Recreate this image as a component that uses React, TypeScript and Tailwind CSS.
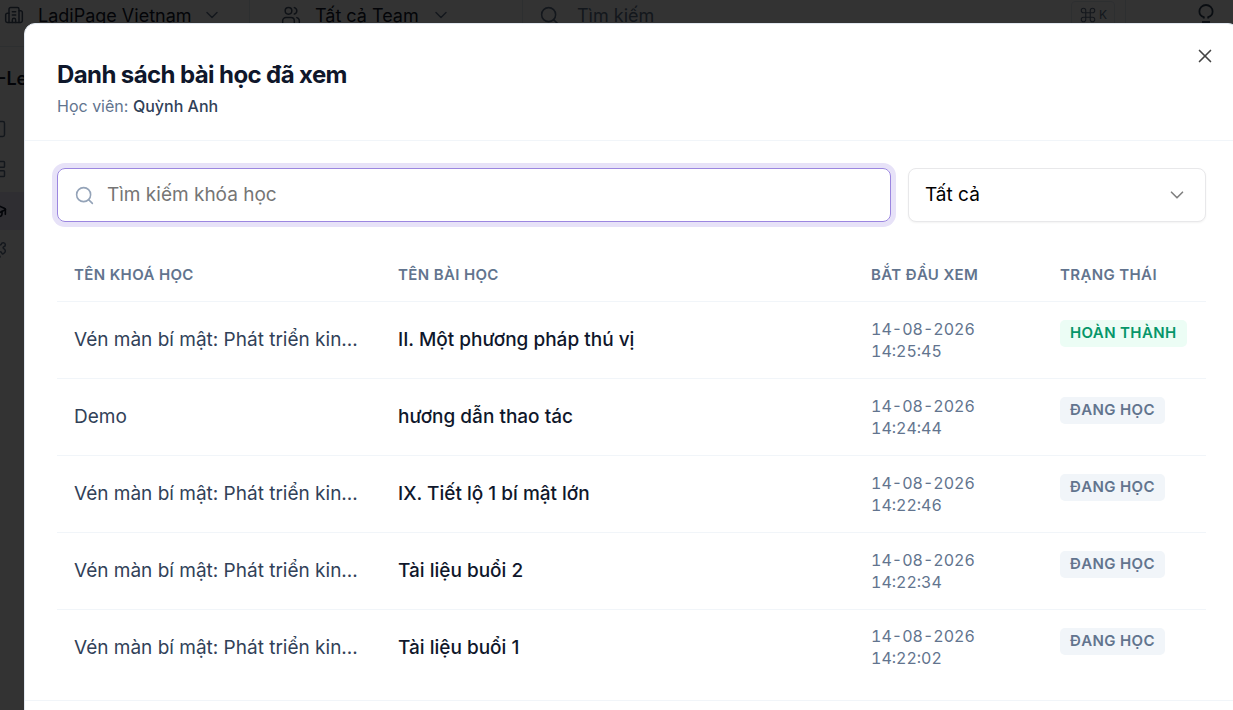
import { useState } from 'react'
import { Building2, ChevronDown, Command, GraduationCap, LayoutGrid, Puzzle, Search, Square, Users, X } from 'lucide-react'

type Status = 'done' | 'learning'

interface Lesson {
  course: string
  name: string
  date: string
  time: string
  status: Status
}

const COURSE = 'Vén màn bí mật: Phát triển kin...'

const lessons: Lesson[] = [
  { course: COURSE, name: 'II. Một phương pháp thú vị', date: '14-08-2026', time: '14:25:45', status: 'done' },
  { course: 'Demo', name: 'hương dẫn thao tác', date: '14-08-2026', time: '14:24:44', status: 'learning' },
  { course: COURSE, name: 'IX. Tiết lộ 1 bí mật lớn', date: '14-08-2026', time: '14:22:46', status: 'learning' },
  { course: COURSE, name: 'Tài liệu buổi 2', date: '14-08-2026', time: '14:22:34', status: 'learning' },
  { course: COURSE, name: 'Tài liệu buổi 1', date: '14-08-2026', time: '14:22:02', status: 'learning' },
]

function StatusBadge({ status }: { status: Status }) {
  const color = status === 'done' ? 'bg-[#ecfdf5] text-[#059669]' : 'bg-slate-100 text-slate-500'
  return (
    <span className={`inline-flex h-[27px] items-center rounded-[5px] px-[10px] text-[15px] font-semibold tracking-wide whitespace-nowrap ${color}`}>
      {status === 'done' ? 'HOÀN THÀNH' : 'ĐANG HỌC'}
    </span>
  )
}

function BulbIcon() {
  return (
    <svg width="16" height="20" viewBox="0 0 16 20" fill="none" stroke="currentColor" strokeWidth="1.8">
      <path d="M5.800 14.500v-1.400C3 12.300 1.400 10.200 1.400 7.600a6.600 6.600 0 0 1 13.200 0c0 2.600-1.600 4.700-4.400 5.500v1.400" />
      <path d="M4 18h8" />
    </svg>
  )
}

function TopBar() {
  return (
    <header className="-mt-4 flex h-[63px] shrink-0 items-center border-b border-slate-200 text-[18px] text-slate-900">
      <button className="flex h-full w-[250px] items-center border-r border-slate-200 pl-1">
        <Building2 size={20} strokeWidth={1.8} className="text-slate-600" />
        <span className="ml-[14px]">LadiPage Vietnam</span>
        <ChevronDown size={20} strokeWidth={1.8} className="ml-[10px] text-slate-500" />
      </button>
      <button className="flex h-full w-[273px] items-center border-r border-slate-200 pl-[31px]">
        <Users size={20} strokeWidth={1.8} className="text-slate-600" />
        <span className="ml-[14px]">Tất cả Team</span>
        <ChevronDown size={20} strokeWidth={1.8} className="ml-3 text-slate-500" />
      </button>
      <label className="flex h-full flex-1 items-center border-r border-slate-200 pr-[10px] pl-4">
        <Search size={21} strokeWidth={1.8} className="shrink-0 text-slate-500" />
        <input
          type="search"
          placeholder="Tìm kiếm"
          aria-label="Tìm kiếm"
          className="ml-[17px] min-w-0 flex-1 outline-none placeholder:text-slate-500"
        />
        <kbd className="flex h-[28px] w-[44px] items-center justify-center gap-[2px] rounded border border-slate-200 font-[Inter,sans-serif] text-[12px] text-slate-500">
          <Command size={18} strokeWidth={1.5} />
          K
        </kbd>
      </label>
      <button aria-label="Gợi ý" className="flex w-[107px] justify-center pl-[53px] pr-[1px] pb-[3px] text-slate-700">
        <BulbIcon />
      </button>
    </header>
  )
}

function Sidebar() {
  return (
    <aside className="w-6 text-slate-500">
      <p className="-ml-[2px] pt-[19px] pb-[20px] text-[18px] leading-[26px] font-semibold whitespace-nowrap text-slate-900">-Le</p>
      <nav className="flex flex-col [&_svg]:-ml-[13px]">
        <a href="#overview" aria-label="Tổng quan" className="flex h-[34px] items-center"><Square size={20} strokeWidth={1.8} /></a>
        <a href="#courses" aria-label="Khóa học" className="flex h-[46px] items-center"><LayoutGrid size={20} strokeWidth={1.8} /></a>
        <a href="#students" aria-label="Học viên" className="flex h-[38px] items-center bg-[#ebe6fb] text-slate-900"><GraduationCap size={20} /></a>
        <a href="#apps" aria-label="Ứng dụng" className="flex h-[42px] items-center"><Puzzle size={20} strokeWidth={1.8} /></a>
      </nav>
    </aside>
  )
}

function LessonTable({ rows }: { rows: Lesson[] }) {
  return (
    <table className="mt-6 w-full table-fixed border-collapse text-left">
      <thead>
        <tr className="h-[55px] border-b border-slate-100 text-[15px] text-slate-500 [&>th]:px-[17px] [&>th]:pt-[3px] [&>th]:font-semibold [&>th]:tracking-wide">
          <th className="w-[324px]">TÊN KHOÁ HỌC</th>
          <th>TÊN BÀI HỌC</th>
          <th className="w-[189px]">BẮT ĐẦU XEM</th>
          <th className="w-[163px]">TRẠNG THÁI</th>
        </tr>
      </thead>
      <tbody>
        {rows.map(r => (
          <tr key={r.time} className="h-[77px] border-b border-slate-100 last:h-[76px] last:border-b-0">
            <td className="truncate pt-[2px] pl-[17px] text-[19px] text-slate-700">{r.course}</td>
            <td className="px-[17px] pt-[2px] text-[19px] font-medium text-slate-900">{r.name}</td>
            <td className="px-[17px] text-[16px] leading-[22px] text-slate-500 tabular-nums">
              {r.date}<br />{r.time}
            </td>
            <td className="pt-[18px] pl-[17px] align-top">
              <StatusBadge status={r.status} />
            </td>
          </tr>
        ))}
      </tbody>
    </table>
  )
}

export default function App() {
  const [query, setQuery] = useState('')
  const [status, setStatus] = useState('all')

  const rows = lessons.filter(l =>
    l.course.toLowerCase().includes(query.toLowerCase()) && (status === 'all' || l.status === status))

  return (
    <div className="h-screen overflow-hidden bg-white font-[Inter,sans-serif]">
      <TopBar />
      <Sidebar />

      <div className="fixed inset-0 overflow-hidden bg-black/80 pt-[23px] pl-6">
        <div role="dialog" aria-modal="true" aria-labelledby="lessons-title" className="-mr-[6px] min-h-full rounded-[11px] border border-slate-200 bg-white">
          {/* Title */}
          <div className="flex items-start justify-between border-b border-slate-100 pt-[35px] pr-[22px] pb-[22px] pl-8">
            <div>
              <h2 id="lessons-title" className="text-[24px] leading-[32px] font-bold tracking-tight text-slate-900">Danh sách bài học đã xem</h2>
              <p className="mt-[3px] text-[16px] leading-[24px] text-slate-500">
                Học viên: <span className="font-medium text-slate-700">Quỳnh Anh</span>
              </p>
            </div>
            <button aria-label="Đóng" className="-mt-[14px] text-[#444444]">
              <X size={22} strokeWidth={1.8} />
            </button>
          </div>

          <div className="px-8 pt-[27px] pb-[15px]">
            {/* Filters */}
            <div className="flex gap-[17px]">
              <label className="flex h-[54px] flex-1 items-center rounded-lg border border-[#9b86e0] pl-4 ring-[5px] ring-[#e7e2f8]">
                <Search size={21} strokeWidth={1.8} className="shrink-0 text-[#94a3b8]" />
                <input
                  type="text"
                  value={query}
                  onChange={e => setQuery(e.target.value)}
                  placeholder="Tìm kiếm khóa học"
                  aria-label="Tìm kiếm khóa học"
                  className="mx-3 min-w-0 flex-1 text-[19px] outline-none placeholder:text-[#757575]"
                />
              </label>
              <div className="relative w-[298px]">
                <select
                  value={status}
                  onChange={e => setStatus(e.target.value)}
                  aria-label="Trạng thái"
                  className="h-[54px] w-full appearance-none rounded-lg border border-[#e8e8ea] bg-white px-4 text-[19px] text-black shadow-xs"
                >
                  <option value="all">Tất cả</option>
                  <option value="done">Hoàn thành</option>
                  <option value="learning">Đang học</option>
                </select>
                <ChevronDown size={22} strokeWidth={1.8} className="pointer-events-none absolute top-4 right-[18px] text-[#808080]" />
              </div>
            </div>

            <LessonTable rows={rows} />
          </div>

          <div className="h-20 border-t border-slate-100" />
        </div>
      </div>
    </div>
  )
}
